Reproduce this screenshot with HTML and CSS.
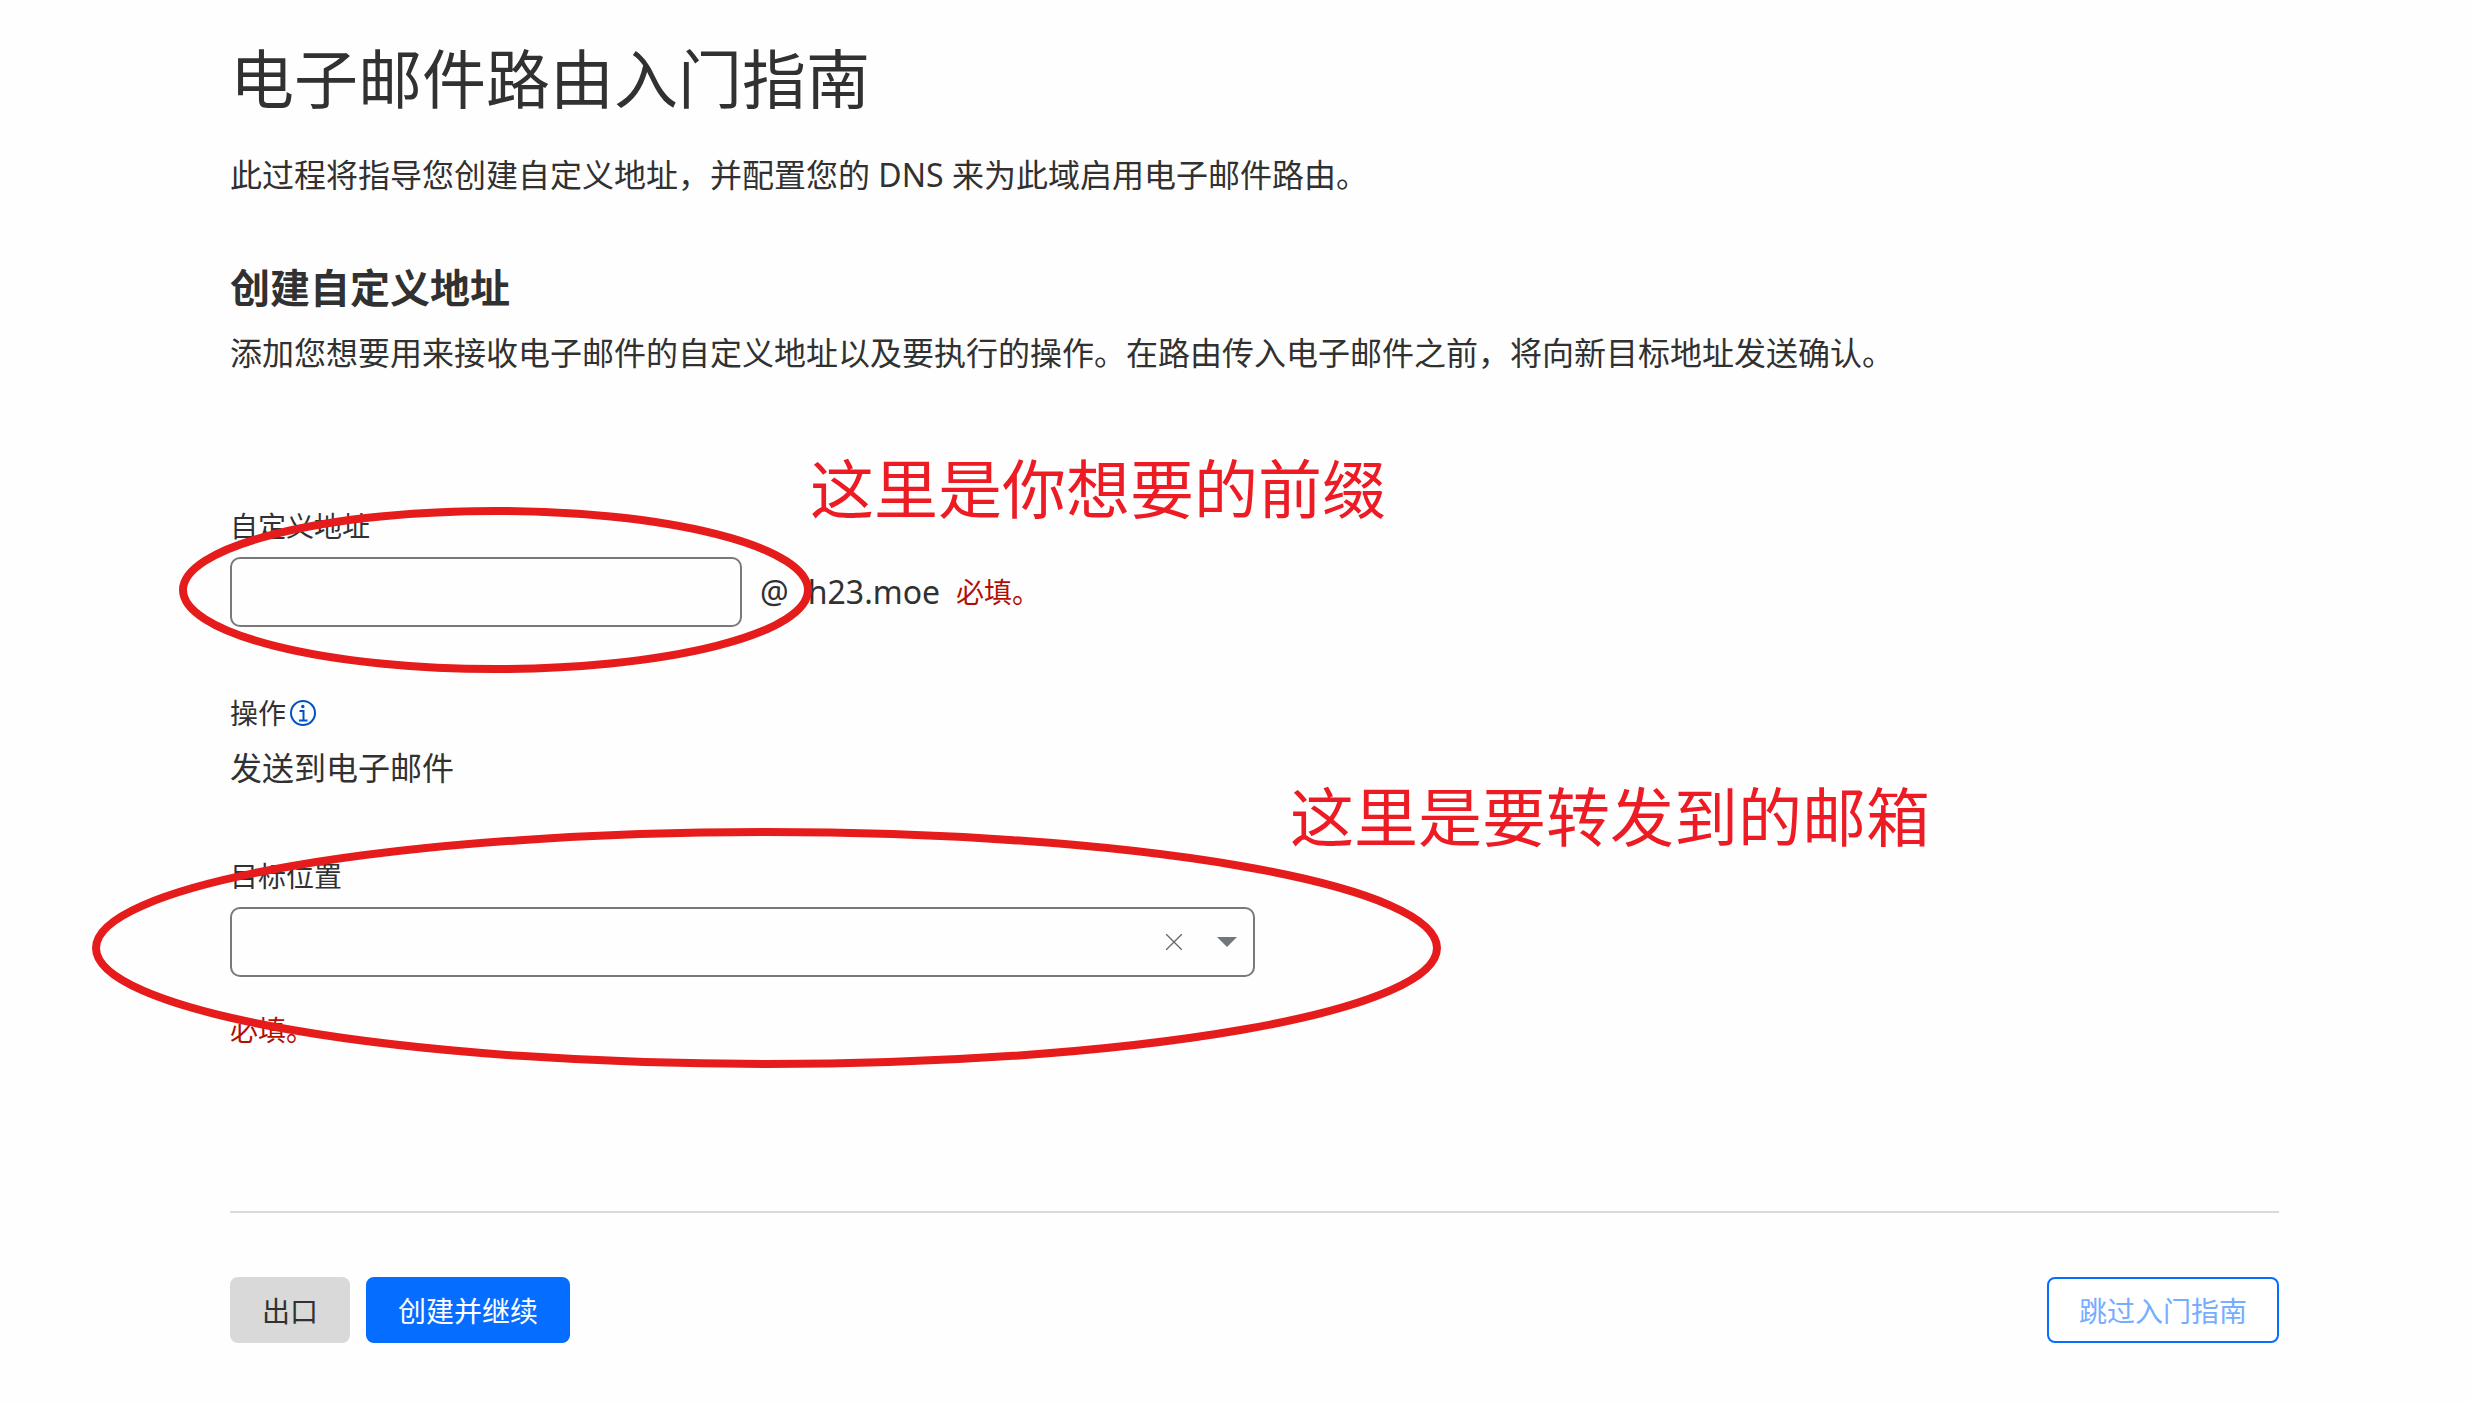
FILE: index.html
```html
<!DOCTYPE html>
<html lang="zh-CN">
  <head>
    <meta charset="UTF-8">
    <title>电子邮件路由入门指南</title>
    <link rel="stylesheet" href="styles.css">
  </head>
  <body>
    <main class="page">
      <h1>电子邮件路由入门指南</h1>
      <p class="intro">此过程将指导您创建自定义地址，并配置您的 DNS 来为此域启用电子邮件路由。</p>

      <h2>创建自定义地址</h2>
      <p class="description">添加您想要用来接收电子邮件的自定义地址以及要执行的操作。在路由传入电子邮件之前，将向新目标地址发送确认。</p>

      <form>
        <div class="field">
          <label for="custom-address">自定义地址</label>
          <div class="address-row">
            <input type="text" id="custom-address">
            <span class="at">@</span>
            <span class="domain">h23.moe</span>
            <span class="error">必填。</span>
          </div>
          <svg class="circle circle-address" viewBox="0 0 633 166">
            <ellipse cx="316.500" cy="83" rx="312.500" ry="79"/>
          </svg>
          <div class="note note-address">这里是你想要的前缀</div>
        </div>

        <div class="field action">
          <div class="label">
            操作
            <svg class="info" viewBox="0 0 26 26" fill="none" stroke="#0051c3" stroke-width="2">
              <circle cx="13" cy="13" r="12"/>
              <path d="M9.500 11H13.500V20M9 20.500H17.500"/>
              <circle cx="12.800" cy="6.500" r="1.700" fill="#0051c3" stroke="none"/>
            </svg>
          </div>
          <p class="action-value">发送到电子邮件</p>
        </div>

        <div class="field">
          <label for="destination">目标位置</label>
          <div class="select-box">
            <select id="destination">
              <option value=""></option>
            </select>
            <button type="button" class="clear" aria-label="清除">
              <svg viewBox="0 0 16 16" stroke="#62676a" stroke-width="1.300"><path d="M0 0L16 16M16 0L0 16"/></svg>
            </button>
            <svg class="caret" viewBox="0 0 20 10"><path d="M0 0H20L10 10Z" fill="#72777b"/></svg>
          </div>
          <p class="error">必填。</p>
          <svg class="circle circle-destination" viewBox="0 0 1349 240">
            <ellipse cx="674.500" cy="120" rx="670.500" ry="116"/>
          </svg>
          <div class="note note-destination">这里是要转发到的邮箱</div>
        </div>

        <div class="footer">
          <button type="button" class="btn btn-exit">出口</button>
          <button type="submit" class="btn btn-primary">创建并继续</button>
          <button type="button" class="btn btn-skip">跳过入门指南</button>
        </div>
      </form>
    </main>
  </body>
</html>
```
FILE: styles.css
```css
* {
  box-sizing: border-box;
}

body {
  margin: 0;
  background-color: #fefefe;
  color: #313131;
  font-family: "Noto Sans", "Noto Sans CJK SC", sans-serif;
  font-size: 32px;
  line-height: 48px;
}

h1,
h2,
p {
  margin: 0;
}

.page {
  padding: 39px 191px 60px 230px;
}

h1 {
  font-size: 64px;
  font-weight: 400;
  line-height: 80px;
}

.intro {
  margin-top: 32px;
}

h2 {
  margin-top: 61px;
  font-size: 40px;
  font-weight: 700;
  line-height: 56px;
}

.description {
  margin-top: 13px;
}

form {
  margin-top: 129px;
}

.field {
  position: relative;
  margin-bottom: 66px;
}

.field.action {
  margin-bottom: 64px;
}

label,
.label {
  display: flex;
  align-items: center;
  margin-bottom: 11px;
  font-size: 28px;
  line-height: 40px;
}

.address-row {
  display: flex;
  align-items: center;
}

input,
select {
  height: 70px;
  padding: 0 16px;
  border: 2px solid #797979;
  border-radius: 10px;
  background-color: transparent;
  color: #313131;
  font: inherit;
}

input {
  width: 512px;
}

.at {
  margin-left: 18px;
}

.domain {
  margin-left: 19px;
}

.error {
  color: #b20f03;
  font-size: 28px;
  line-height: 40px;
}

.domain + .error {
  margin-left: 16px;
}

.info {
  width: 26px;
  height: 26px;
  margin-left: 4px;
}

.select-box {
  position: relative;
  width: 50%;
  height: 70px;
  margin-bottom: 33px;
}

select {
  width: 100%;
  appearance: none;
}

.clear {
  position: absolute;
  top: 27px;
  right: 73px;
  width: 16px;
  height: 16px;
  padding: 0;
  border: none;
  background: none;
  cursor: pointer;
}

.clear svg {
  display: block;
}

.caret {
  position: absolute;
  top: 30px;
  right: 18px;
  width: 20px;
  height: 10px;
  pointer-events: none;
}

/* hand-drawn hints on top of the form */
.circle {
  position: absolute;
  fill: none;
  stroke: #e61b1b;
  stroke-width: 8px;
  pointer-events: none;
}

.circle-address {
  top: 1px;
  left: -51px;
  width: 633px;
  height: 166px;
}

.circle-destination {
  top: -28px;
  left: -138px;
  width: 1349px;
  height: 240px;
}

.note {
  position: absolute;
  color: #ed1c24;
  font-size: 64px;
  line-height: 80px;
  white-space: nowrap;
}

.note-address {
  top: -57px;
  left: 580px;
}

.note-destination {
  top: -79px;
  left: 1060px;
}

.footer {
  display: flex;
  gap: 16px;
  margin-top: 161px;
  padding-top: 64px;
  border-top: 2px solid #d9d9d9;
}

.btn {
  height: 66px;
  padding: 0 30px;
  border: 2px solid transparent;
  border-radius: 8px;
  font-family: inherit;
  font-size: 28px;
  cursor: pointer;
}

.btn-exit {
  background-color: #d9d9d9;
  color: #313131;
}

.btn-primary {
  border-color: #056dff;
  background-color: #056dff;
  color: white;
}

.btn-skip {
  margin-left: auto;
  border-color: #056dff;
  background-color: white;
  color: #76adff;
}
```
